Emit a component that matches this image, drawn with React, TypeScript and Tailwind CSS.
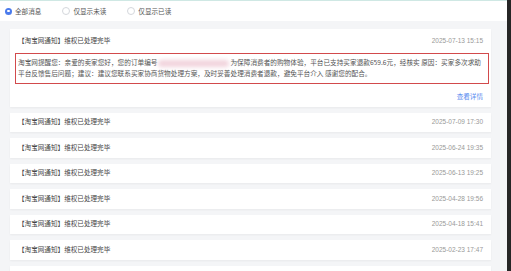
import { useState } from "react";

type Notice = { title: string; date: string };

const notices: Notice[] = [
  { title: "【淘宝网通知】维权已处理完毕", date: "2025-07-09 17:30" },
  { title: "【淘宝网通知】维权已处理完毕", date: "2025-06-24 19:35" },
  { title: "【淘宝网通知】维权已处理完毕", date: "2025-06-13 19:25" },
  { title: "【淘宝网通知】维权已处理完毕", date: "2025-04-28 19:56" },
  { title: "【淘宝网通知】维权已处理完毕", date: "2025-04-18 15:41" },
  { title: "【淘宝网通知】维权已处理完毕", date: "2025-02-23 17:47" },
];

const filters = ["全部消息", "仅显示未读", "仅显示已读"];

function Radio({ checked }: { checked: boolean }) {
  if (checked) {
    return (
      <span className="flex h-[7px] w-[7px] items-center justify-center rounded-full bg-[#4b7bec]">
        <span className="h-[2.5px] w-[2.5px] rounded-full bg-white" />
      </span>
    );
  }
  return <span className="h-[8px] w-[8px] rounded-full border border-[#d4d7dc] bg-white" />;
}

export default function App() {
  const [filter, setFilter] = useState(0);

  return (
    <div className="flex h-[271px] w-[511px] overflow-hidden font-['Noto_Sans_CJK_SC',sans-serif]">
      <div className="w-[507px] bg-[#f4f5f7]">
        <div className="flex h-[21px] items-center gap-[21px] border-t border-[#cfe8e4] bg-white pl-[5px]">
          {filters.map((label, i) => (
            <button
              key={label}
              type="button"
              onClick={() => setFilter(i)}
              className="flex items-center gap-[3px] text-[6.6px] leading-none text-[#555]"
            >
              <Radio checked={filter === i} />
              <span>{label}</span>
            </button>
          ))}
        </div>

        <div className="ml-[10px] mr-[16px] mt-[8px] flex flex-col gap-[6px]">
          <div className="bg-white shadow-[0_1px_2px_rgba(0,0,0,0.05)]">
            <div className="flex h-[24px] items-start justify-between px-[8px] pt-[6px] leading-[11px]">
              <span className="text-[6.6px] text-[#444]">【淘宝网通知】维权已处理完毕</span>
              <span className="font-['Liberation_Sans',sans-serif] text-[6.5px] text-[#999]">2025-07-13 15:15</span>
            </div>
            <div className="ml-[5px] mr-[2px] border-[1.5px] border-[#d24a4c] pb-[3.5px] pl-[2px] pt-[3px] text-[6.65px] leading-[11px] text-[#555]">
              <p className="whitespace-nowrap">
                淘宝网提醒您：亲爱的卖家您好，您的订单编号
                <span className="mx-[1px] inline-block h-[7px] w-[71px] rounded-full bg-[#f1d3dc] align-middle blur-[2px]" />
                为保障消费者的购物体验，平台已支持买家退款659.6元，经核实 原因：买家多次求助
              </p>
              <p className="whitespace-nowrap">
                平台反馈售后问题；建议：建议您联系买家协商货物处理方案，及时妥善处理消费者退款，避免平台介入 感谢您的配合。
              </p>
            </div>
            <div className="flex justify-end px-[8px] pb-[5px] pt-[7px] leading-[11px]">
              <button type="button" className="text-[6.6px] text-[#5b8def]">
                查看详情
              </button>
            </div>
          </div>

          {notices.map((n) => (
            <div
              key={n.date}
              className="flex h-[19.5px] shrink-0 items-center justify-between bg-white px-[8px] shadow-[0_1px_2px_rgba(0,0,0,0.05)]"
            >
              <span className="text-[6.6px] text-[#444]">{n.title}</span>
              <span className="font-['Liberation_Sans',sans-serif] text-[6.5px] text-[#999]">{n.date}</span>
            </div>
          ))}
          {/* next card, cut off by the bottom edge */}
          <div className="h-[19.5px] shrink-0 bg-white shadow-[0_1px_2px_rgba(0,0,0,0.05)]" />
        </div>
      </div>
      <div className="w-[4px] shrink-0 bg-[#262626]" />
    </div>
  );
}
